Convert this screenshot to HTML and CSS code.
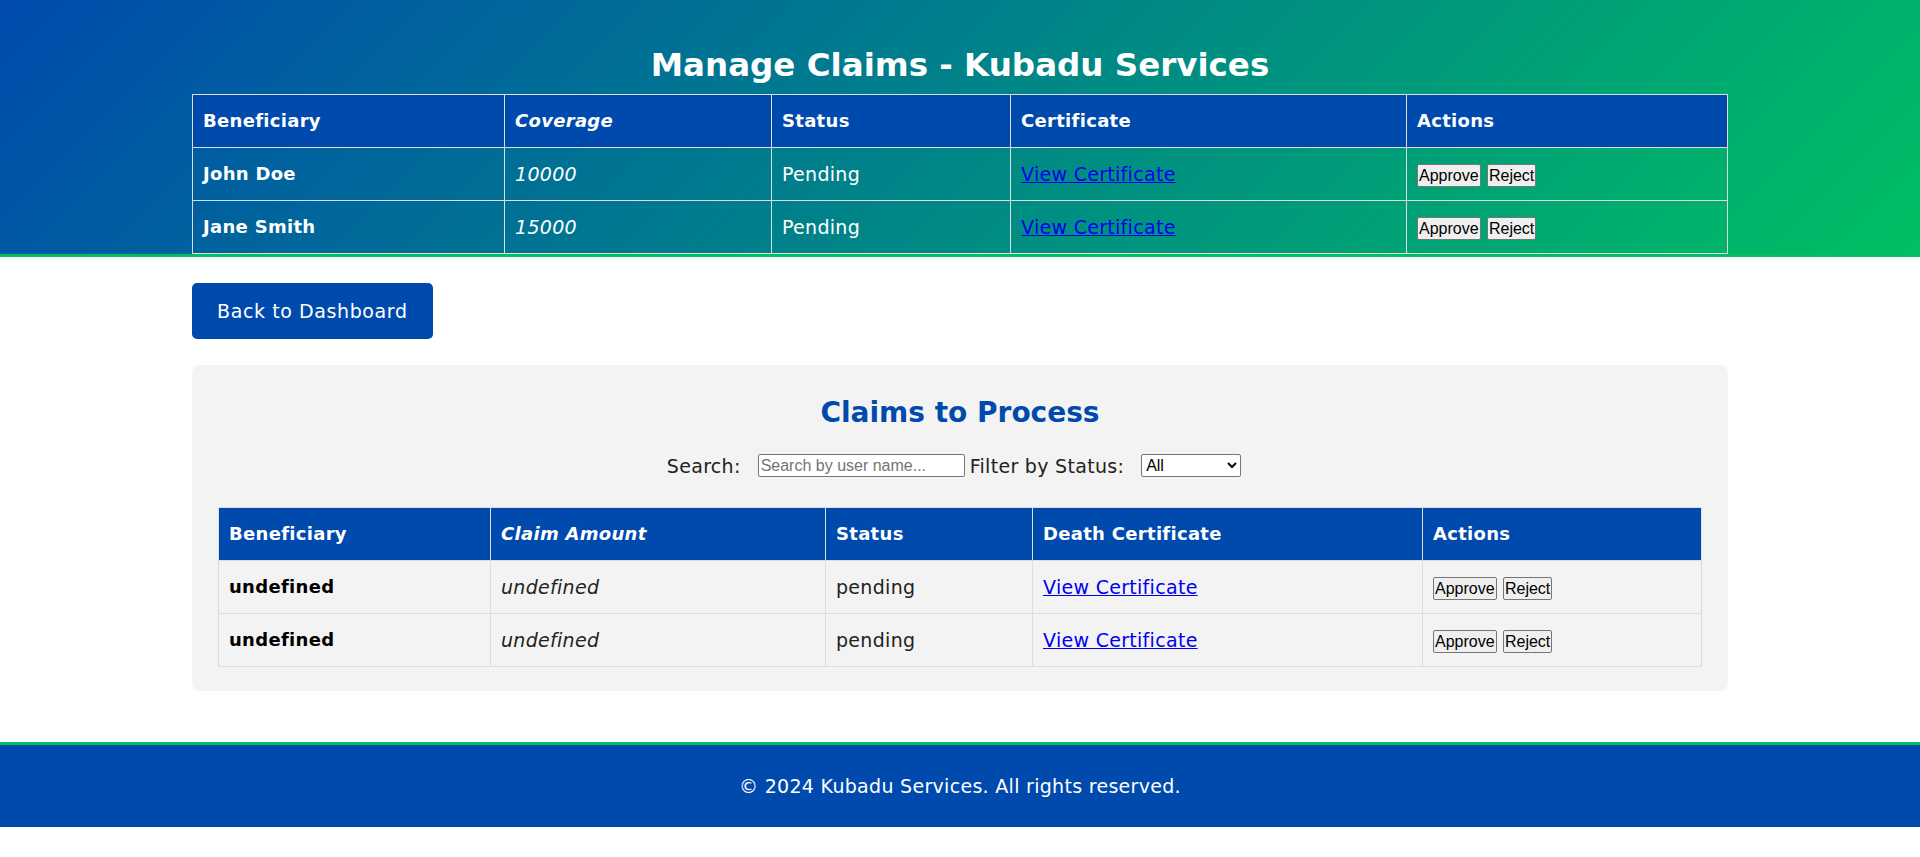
FILE: index.html
```html
<!DOCTYPE html>
<html lang="en">
<head>
<meta charset="utf-8">
<title>Manage Claims - Kubadu Services</title>
<link rel="stylesheet" href="styles.css">
</head>
<body>
<header class="site-header">
  <h1 class="page-title">Manage Claims - Kubadu Services</h1>
  <table class="data-table top-table">
    <thead>
      <tr><th>Beneficiary</th><th>Coverage</th><th>Status</th><th>Certificate</th><th>Actions</th></tr>
    </thead>
    <tbody>
      <tr><td>John Doe</td><td>10000</td><td>Pending</td><td><a href="#">View Certificate</a></td><td><button class="act-btn">Approve</button> <button class="act-btn">Reject</button></td></tr>
      <tr><td>Jane Smith</td><td>15000</td><td>Pending</td><td><a href="#">View Certificate</a></td><td><button class="act-btn">Approve</button> <button class="act-btn">Reject</button></td></tr>
    </tbody>
  </table>
</header>

<main class="content">
  <a class="back-btn" href="#">Back to Dashboard</a>

  <section class="claims-card">
    <h2 class="card-title">Claims to Process</h2>
    <div class="filters">
      <label class="filter-label" for="search">Search:</label>
      <input id="search" class="search-input" type="text" placeholder="Search by user name...">
      <label class="filter-label" for="status">Filter by Status:</label>
      <select id="status" class="status-select"><option>All</option><option>Pending</option><option>Approved</option><option>Rejected</option></select>
    </div>
    <table class="data-table card-table">
      <thead>
        <tr><th>Beneficiary</th><th>Claim Amount</th><th>Status</th><th>Death Certificate</th><th>Actions</th></tr>
      </thead>
      <tbody>
        <tr><td>undefined</td><td>undefined</td><td>pending</td><td><a href="#">View Certificate</a></td><td><button class="act-btn">Approve</button> <button class="act-btn">Reject</button></td></tr>
        <tr><td>undefined</td><td>undefined</td><td>pending</td><td><a href="#">View Certificate</a></td><td><button class="act-btn">Approve</button> <button class="act-btn">Reject</button></td></tr>
      </tbody>
    </table>
  </section>
</main>

<footer class="site-footer">
  <p class="footer-text">© 2024 Kubadu Services. All rights reserved.</p>
</footer>
</body>
</html>
```
FILE: styles.css
```css
* { box-sizing: border-box; }

html, body {
  margin: 0;
  padding: 0;
}

body {
  font-family: "DejaVu Sans", "Inter", sans-serif;
  font-size: 19px;
  letter-spacing: 0.3px;
  color: #222;
  background: #fff;
  padding-bottom: 31px;
}

.site-header {
  background: linear-gradient(135deg, #004aad 0%, #00bf63 100%);
  border-bottom: 3px solid #00bf63;
  padding-top: 46px;
  color: #fff;
}

.page-title {
  margin: 0 0 10px;
  text-align: center;
  font-size: 32.5px;
  line-height: 38px;
  font-weight: 700;
  letter-spacing: 0;
}

.data-table {
  border-collapse: collapse;
  table-layout: fixed;
}

.data-table th,
.data-table td {
  padding: 15px 10px;
  line-height: 22px;
  text-align: left;
  vertical-align: middle;
  white-space: nowrap;
}

.data-table th {
  background: #004aad;
  color: #fff;
  font-weight: 700;
  font-size: 18px;
}

.data-table th:nth-child(2) { font-style: italic; }
.data-table td:nth-child(1) { font-weight: 700; font-size: 18px; }
.data-table td:nth-child(2) { font-style: italic; }

.data-table a {
  color: #0000ee;
  text-decoration: underline;
}

.top-table {
  width: 80%;
  margin: 0 auto;
}

.top-table th,
.top-table td {
  border: 1px solid #ddd;
  color: #fff;
}

.top-table th:nth-child(1) { width: 312px; }
.top-table th:nth-child(2) { width: 267px; }
.top-table th:nth-child(3) { width: 239px; }
.top-table th:nth-child(4) { width: 396px; }

.act-btn {
  display: inline-block;
  font-family: "Liberation Sans", Arial, sans-serif;
  font-size: 16px;
  font-weight: 400;
  font-style: normal;
  letter-spacing: normal;
  color: #000;
  background: #efefef;
  border: 1px solid #767676;
  border-radius: 2px;
  padding: 1px 1px;
  height: 23px;
  line-height: 19px;
  margin: -2px 0;
  vertical-align: middle;
  cursor: pointer;
}

.content {
  width: 80%;
  margin: 0 auto;
  padding-top: 26px;
}

.back-btn {
  display: inline-block;
  background: #004aad;
  color: #fff;
  text-decoration: none;
  padding: 17px 25px;
  line-height: 22px;
  letter-spacing: 0.6px;
  border-radius: 5px;
}

.claims-card {
  margin-top: 26px;
  background: #f3f3f3;
  border-radius: 8px;
  padding: 32px 26px 24px;
}

.card-title {
  margin: 0;
  text-align: center;
  color: #004aad;
  font-size: 28px;
  line-height: 32px;
  font-weight: 700;
  letter-spacing: 0;
}

.filters {
  margin-top: 25px;
  display: flex;
  justify-content: center;
  align-items: center;
  height: 23px;
}

.filter-label {
  margin-right: 17px;
  color: #222;
}

.filter-label + .search-input { margin-right: 5px; }

.search-input {
  width: 207px;
  height: 23px;
  font-family: "Liberation Sans", Arial, sans-serif;
  font-size: 16px;
  letter-spacing: normal;
  padding: 1px 2px;
  border: 1px solid #767676;
  border-radius: 2px;
  background: #fff;
}

.search-input::placeholder { color: #757575; }

.status-select {
  width: 100px;
  height: 23px;
  margin-right: 12px;
  font-family: "Liberation Sans", Arial, sans-serif;
  font-size: 16px;
  letter-spacing: normal;
  border: 1px solid #767676;
  border-radius: 2px;
  background: #fff;
  color: #000;
}

.card-table {
  width: 100%;
  margin-top: 30px;
}

.card-table th,
.card-table td {
  border: 1px solid #ddd;
}

.card-table td { color: #222; }
.card-table td:nth-child(1) { color: #000; }

.card-table th:nth-child(1) { width: 272px; }
.card-table th:nth-child(2) { width: 335px; }
.card-table th:nth-child(3) { width: 207px; }
.card-table th:nth-child(4) { width: 390px; }

.site-footer {
  margin-top: 51px;
  background: #004aad;
  border-top: 3px solid #00bf63;
  padding: 30px 0;
  text-align: center;
  color: #fff;
}

.footer-text {
  margin: 0;
  line-height: 22px;
}
```
